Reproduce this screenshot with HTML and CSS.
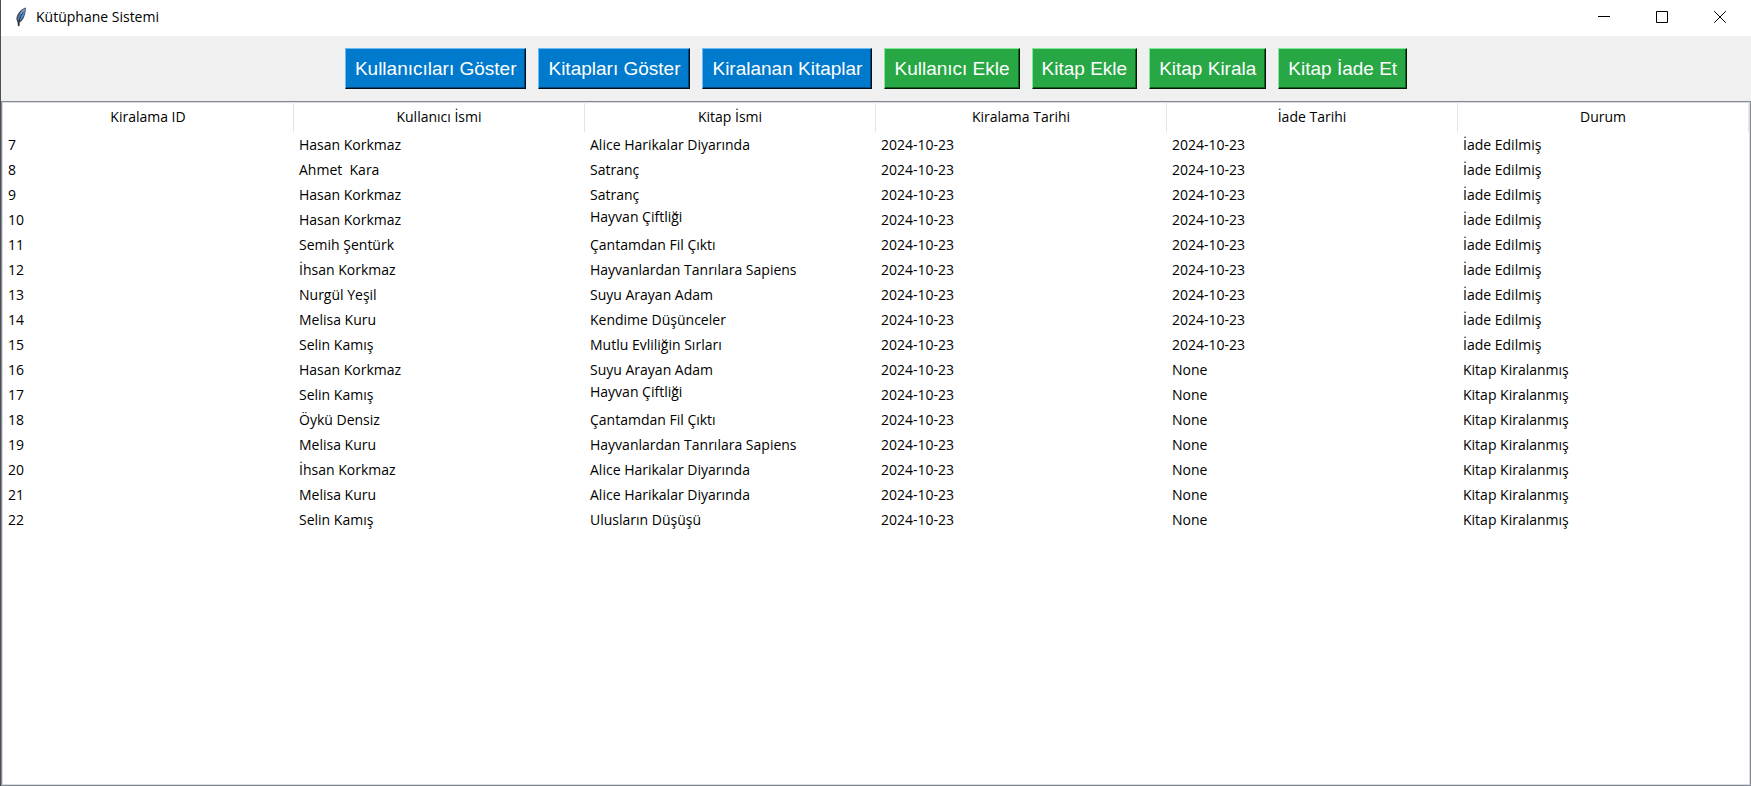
FILE: index.html
```html
<!DOCTYPE html>
<html lang="tr">
<head>
<meta charset="utf-8">
<title>Kütüphane Sistemi</title>
<link rel="stylesheet" href="styles.css">
</head>
<body>
<div class="window">
  <header class="titlebar">
    <svg class="app-icon" viewBox="0 0 12 20" aria-hidden="true">
      <path d="M11 .5C6.500 1.500 2 6 1.300 12L2.500 15.500 3 19.500 4.500 18.500 4.500 15.500C8 14 10.500 9 11 .5Z" fill="#4a4e54"/>
      <path d="M10.300 1.500C7 3 3.500 7.500 2.800 12.500L4.500 14C8 11.500 9.800 7 10.300 1.500Z" fill="#4f8ad2"/>
      <path d="M8 5Q5 9 3.800 15V19" fill="none" stroke="#1f2733" stroke-width="1"/>
      <path d="M9.800 2Q7 4 6 7" fill="none" stroke="#a8c4e8" stroke-width="1"/>
    </svg>
    <h1 class="title">Kütüphane Sistemi</h1>
    <div class="controls">
      <button class="control" type="button" aria-label="Simge durumuna küçült"><svg viewBox="0 0 12 12"><path d="M0 5.500H12"/></svg></button>
      <button class="control" type="button" aria-label="Ekranı kapla"><svg viewBox="0 0 12 12"><path d="M.5 .5H11.500V11.500H.5Z"/></svg></button>
      <button class="control" type="button" aria-label="Kapat"><svg viewBox="0 0 12 12"><path d="M.2 .2L11.800 11.800M11.800 .2L.2 11.800"/></svg></button>
    </div>
  </header>
  <nav class="toolbar">
    <button class="button button-show" type="button">Kullanıcıları Göster</button>
    <button class="button button-show" type="button">Kitapları Göster</button>
    <button class="button button-show" type="button">Kiralanan Kitaplar</button>
    <button class="button button-act" type="button">Kullanıcı Ekle</button>
    <button class="button button-act" type="button">Kitap Ekle</button>
    <button class="button button-act" type="button">Kitap Kirala</button>
    <button class="button button-act" type="button">Kitap İade Et</button>
  </nav>
  <main class="list">
    <table class="rentals">
      <thead>
        <tr><th scope="col">Kiralama ID</th><th scope="col">Kullanıcı İsmi</th><th scope="col">Kitap İsmi</th><th scope="col">Kiralama Tarihi</th><th scope="col">İade Tarihi</th><th scope="col">Durum</th></tr>
      </thead>
      <tbody>
        <tr><td>7</td><td>Hasan Korkmaz</td><td>Alice Harikalar Diyarında</td><td>2024-10-23</td><td>2024-10-23</td><td>İade Edilmiş</td></tr>
        <tr><td>8</td><td>Ahmet  Kara</td><td>Satranç</td><td>2024-10-23</td><td>2024-10-23</td><td>İade Edilmiş</td></tr>
        <tr><td>9</td><td>Hasan Korkmaz</td><td>Satranç</td><td>2024-10-23</td><td>2024-10-23</td><td>İade Edilmiş</td></tr>
        <tr><td>10</td><td>Hasan Korkmaz</td><td class="top">Hayvan Çiftliği</td><td>2024-10-23</td><td>2024-10-23</td><td>İade Edilmiş</td></tr>
        <tr><td>11</td><td>Semih Şentürk</td><td>Çantamdan Fil Çıktı</td><td>2024-10-23</td><td>2024-10-23</td><td>İade Edilmiş</td></tr>
        <tr><td>12</td><td>İhsan Korkmaz</td><td>Hayvanlardan Tanrılara Sapiens</td><td>2024-10-23</td><td>2024-10-23</td><td>İade Edilmiş</td></tr>
        <tr><td>13</td><td>Nurgül Yeşil</td><td>Suyu Arayan Adam</td><td>2024-10-23</td><td>2024-10-23</td><td>İade Edilmiş</td></tr>
        <tr><td>14</td><td>Melisa Kuru</td><td>Kendime Düşünceler</td><td>2024-10-23</td><td>2024-10-23</td><td>İade Edilmiş</td></tr>
        <tr><td>15</td><td>Selin Kamış</td><td>Mutlu Evliliğin Sırları</td><td>2024-10-23</td><td>2024-10-23</td><td>İade Edilmiş</td></tr>
        <tr><td>16</td><td>Hasan Korkmaz</td><td>Suyu Arayan Adam</td><td>2024-10-23</td><td>None</td><td>Kitap Kiralanmış</td></tr>
        <tr><td>17</td><td>Selin Kamış</td><td class="top">Hayvan Çiftliği</td><td>2024-10-23</td><td>None</td><td>Kitap Kiralanmış</td></tr>
        <tr><td>18</td><td>Öykü Densiz</td><td>Çantamdan Fil Çıktı</td><td>2024-10-23</td><td>None</td><td>Kitap Kiralanmış</td></tr>
        <tr><td>19</td><td>Melisa Kuru</td><td>Hayvanlardan Tanrılara Sapiens</td><td>2024-10-23</td><td>None</td><td>Kitap Kiralanmış</td></tr>
        <tr><td>20</td><td>İhsan Korkmaz</td><td>Alice Harikalar Diyarında</td><td>2024-10-23</td><td>None</td><td>Kitap Kiralanmış</td></tr>
        <tr><td>21</td><td>Melisa Kuru</td><td>Alice Harikalar Diyarında</td><td>2024-10-23</td><td>None</td><td>Kitap Kiralanmış</td></tr>
        <tr><td>22</td><td>Selin Kamış</td><td>Ulusların Düşüşü</td><td>2024-10-23</td><td>None</td><td>Kitap Kiralanmış</td></tr>
      </tbody>
    </table>
  </main>
</div>
</body>
</html>
```
FILE: styles.css
```css
* { box-sizing: border-box; }

body {
  margin: 0;
  font-family: "Open Sans", "Noto Sans", sans-serif;
  font-size: 14px;
  line-height: 20px;
  color: #000;
}

.window {
  display: flex;
  flex-direction: column;
  min-height: 100vh;
  border-left: 1px solid #4c5054;
  background: #f0f0f0;
}

.titlebar {
  display: flex;
  align-items: center;
  height: 36px;
  padding: 0 2px 2px 14px;
  background: #fff;
}

.app-icon {
  width: 12px;
  height: 20px;
  margin-right: 9px;
}

.title {
  margin: 0;
  font-size: 14px;
  font-weight: 400;
}

.controls {
  display: flex;
  align-self: stretch;
  margin-left: auto;
}

.control {
  display: flex;
  align-items: center;
  justify-content: center;
  width: 58px;
  padding: 0;
  border: 0;
  background: transparent;
}

.control:hover { background: #e5e5e5; }

.control svg {
  width: 12px;
  height: 12px;
  fill: none;
  stroke: #000;
  stroke-width: 1;
}

.toolbar {
  display: flex;
  flex-wrap: wrap;
  justify-content: center;
  gap: 12px;
  padding: 12px 0;
}

.button {
  height: 41px;
  padding: 0 9px;
  border: 1px solid;
  font-family: "Liberation Sans", Arial, sans-serif;
  font-size: 19px;
  line-height: 24px;
  color: #fff;
}

.button-show {
  border-color: #6cbcf8 #00101c #00101c #6cbcf8;
  box-shadow: inset -1px -1px #00457a;
  background: #007acc;
}

.button-act {
  border-color: #80e898 #041806 #041806 #80e898;
  box-shadow: inset -1px -1px #14601f;
  background: #28a745;
}

.list {
  flex: 1;
  border: 1px solid #828790;
  box-shadow: inset 0 0 0 1px #d9dce0;
  padding: 0 1px 1px;
  background: #fff;
}

.rentals {
  width: 100%;
  table-layout: fixed;
  border-collapse: separate;
  border-spacing: 0;
}

.rentals th {
  height: 30px;
  padding: 0;
  border-right: 1px solid #e5e5e5;
  font-weight: 400;
}

.rentals td {
  height: 25px;
  padding: 0 5px;
  white-space: pre;
}

.rentals .top { vertical-align: top; }
```
